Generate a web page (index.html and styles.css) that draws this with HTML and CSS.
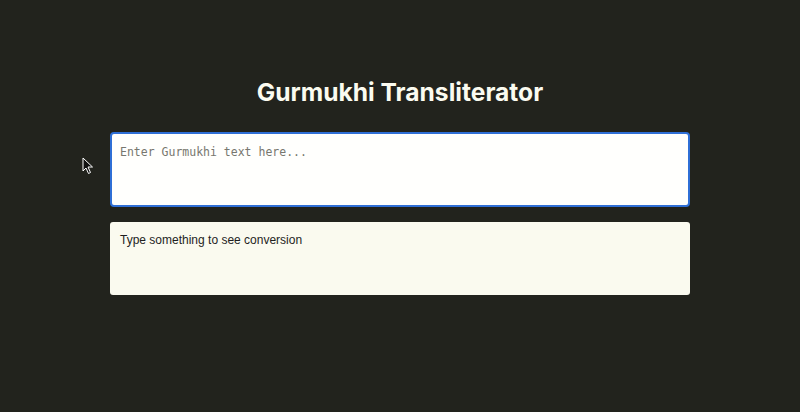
FILE: index.html
```html
<!DOCTYPE html>
<html lang="en">
<head>
<meta charset="utf-8">
<title>Gurmukhi Transliterator</title>
<link rel="stylesheet" href="styles.css">
</head>
<body>
<main class="app">
  <h1 class="title">Gurmukhi Transliterator</h1>
  <textarea class="input" placeholder="Enter Gurmukhi text here..."></textarea>
  <div class="output">Type something to see conversion</div>
</main>
<svg class="cursor" width="12" height="18" viewBox="0 0 12 18"><path d="M1 1 L1 14 L4 11 L6.5 16.5 L8.5 15.5 L6 10 L10.5 10 Z" fill="#111" stroke="#fff" stroke-width="1"/></svg>
</body>
</html>
```
FILE: styles.css
```css
html, body {
  margin: 0;
  padding: 0;
  height: 100%;
}
body {
  background: #22231d;
  font-family: Inter, "Liberation Sans", sans-serif;
  position: relative;
}
.app {
  width: 580px;
  margin: 0 auto;
  padding-top: 76px;
  display: flex;
  flex-direction: column;
}
.title {
  margin: 0 0 24px;
  text-align: center;
  color: #fbfbf0;
  font-size: 24.6px;
  font-weight: 700;
  line-height: 32px;
}
.input {
  box-sizing: border-box;
  width: 580px;
  height: 75px;
  margin: 0;
  padding: 9px 8px;
  border: 2px solid #2f6fd6;
  border-radius: 4px;
  background: #fffffd;
  font-family: "DejaVu Sans Mono", monospace;
  font-size: 11.5px;
  line-height: 18px;
  resize: none;
  outline: none;
}
.input::placeholder {
  color: #77776f;
}
.output {
  box-sizing: border-box;
  margin-top: 15px;
  height: 73px;
  padding: 9px 10px;
  border-radius: 3px;
  background: #fafaef;
  color: #1e1e1e;
  font-family: "Liberation Sans", Arial, sans-serif;
  font-size: 12px;
  line-height: 18px;
}
.cursor {
  position: absolute;
  left: 82px;
  top: 157px;
}
```
